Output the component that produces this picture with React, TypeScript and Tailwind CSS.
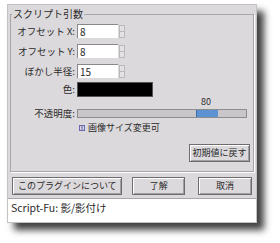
const font = { fontFamily: '"Noto Sans CJK JP", "DejaVu Sans", sans-serif' };

function Spin() {
	return (
		<div className="flex flex-col w-[6px] h-[13px] ml-[1px] border border-[#bcb9bc] bg-[#e4e1e4]">
			<div className="flex-1 border-b border-[#bcb9bc]" />
			<div className="flex-1" />
		</div>
	);
}

function NumRow({ label, value }: { label: string; value: string }) {
	return (
		<div className="flex items-center h-[20px]">
			<span className="w-[66px] text-right pr-[2px] whitespace-nowrap text-[9.5px]">{label}</span>
			<div className="w-[41px] h-[14px] bg-white border-t border-l border-[#8a888a] border-r-[#f4f4f4] border-b-[#f4f4f4] pl-[2px] leading-[13px] text-[10px]">
				{value}
			</div>
			<Spin />
		</div>
	);
}

function Btn({ children, className }: { children: React.ReactNode; className: string }) {
	return (
		<div
			className={`flex items-center justify-center h-[18px] whitespace-nowrap border border-[#6e6c6e] bg-[#dcd9dc] shadow-[inset_1px_1px_0_#ffffff,inset_-1px_-1px_0_#a09ea0] ${className}`}
		>
			{children}
		</div>
	);
}

export default function App() {
	return (
		<div className="w-[280px] h-[243px] bg-white pt-[4px] pl-[7px] text-[9px] text-[#2a2a2a]" style={font}>
			<div className="w-[250px] flex flex-col bg-[#dcd9dc] border border-[#c4c2c4] shadow-[7px_7px_7px_rgba(0,0,0,0.75)]">
				<div className="px-[2px] pt-[9px]">
					<div className="relative h-[158px] border border-[#a8a6a8] shadow-[1px_1px_0_#ffffff]">
						<span className="absolute -top-[8px] left-[1px] bg-[#dcd9dc] px-[1px] leading-[14px] text-[10px]">スクリプト引数</span>
						<div className="pt-[6px] flex flex-col">
							<NumRow label="オフセット X:" value="8" />
							<NumRow label="オフセット Y:" value="8" />
							<NumRow label="ぼかし半径:" value="15" />
							<div className="flex items-center h-[16px]">
								<span className="w-[66px] text-right pr-[2px] text-[9.5px]">色:</span>
								<div className="w-[76px] h-[15px] border border-[#555] bg-black" />
							</div>
							<div className="flex items-center pt-[12px] h-[21px]">
								<span className="w-[66px] text-right pr-[2px] text-[9.5px]">不透明度:</span>
								<div className="relative w-[170px] h-[9px] bg-[#c8c6c8] border border-[#8e8c8e]">
									<div className="absolute left-[118px] top-0 w-[22px] h-[7px] bg-[#5d92d2] border-l border-[#3a6aa8]" />
									<span className="absolute left-[123px] -top-[14px] leading-[12px] text-[9px]">80</span>
								</div>
							</div>
							<div className="flex items-center h-[14px] mt-[3px] pl-[68px]">
								<div className="w-[6px] h-[6px] border border-[#6b6bb0] bg-[#e0e0f0] text-[6px] leading-[4px] text-center text-[#44448a]">x</div>
								<span className="ml-[3px]">画像サイズ変更可</span>
							</div>
							<div className="flex justify-end pr-[3px] pt-[9px]">
								<Btn className="w-[61px]">初期値に戻す</Btn>
							</div>
						</div>
					</div>
				</div>
				<div className="flex items-center px-[4px] pt-[5px] pb-[3px] gap-[10px]">
					<Btn className="w-[111px]">このプラグインについて</Btn>
					<Btn className="w-[53px]">了解</Btn>
					<Btn className="w-[54px] ml-[3px]">取消</Btn>
				</div>
				<div className="h-[24px] bg-white border-t border-[#a8a6a8] pl-[3px] leading-[18px] text-[10.5px]">Script-Fu: 影/影付け</div>
			</div>
		</div>
	);
}
